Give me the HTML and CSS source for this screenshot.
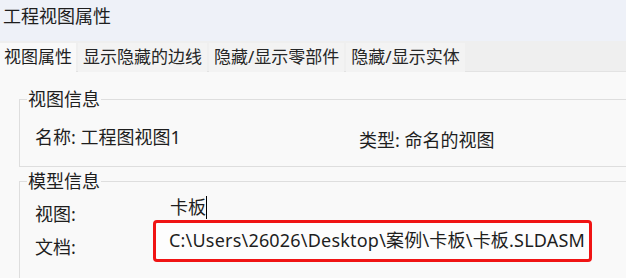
FILE: index.html
```html
<!DOCTYPE html>
<html>
<head>
    <title>工程视图属性</title>
    <link rel="stylesheet" href="styles.css">
</head>
<body>
    <div class="title-bar">工程视图属性</div>
    <div class="tabs">
        <div class="tab active">视图属性</div>
        <div class="tab">显示隐藏的边线</div>
        <div class="tab">隐藏/显示零部件</div>
        <div class="tab">隐藏/显示实体</div>
    </div>
    <div class="panel">
        <fieldset class="group view-info">
            <legend>视图信息</legend>
            <div class="info-row">
                <span class="info-name">名称: 工程图视图1</span>
                <span class="info-type">类型: 命名的视图</span>
            </div>
        </fieldset>
        <fieldset class="group model-info">
            <legend>模型信息</legend>
            <div class="field-grid">
                <span class="field-label">视图:</span>
                <span class="field-value editable">卡板<span class="caret"></span></span>
                <span class="field-label doc-label">文档:</span>
                <span class="field-value highlighted">C:\Users\26026\Desktop\案例\卡板\卡板.SLDASM</span>
            </div>
        </fieldset>
    </div>
</body>
</html>
```

FILE: styles.css
```css
body {
    font-family: "Noto Sans", "Noto Sans CJK SC", sans-serif;
    color: #1e1e1e;
    background-color: #f9f9f9;
    margin: 0;
    width: 626px;
    height: 278px;
    overflow: hidden;
}

.title-bar {
    background-color: #eef1f8;
    height: 41px;
    padding: 4px 0 0 3px;
    box-sizing: border-box;
    font-size: 18px;
    line-height: 24px;
}

.tabs {
    display: flex;
    gap: 2px;
    background-color: #efefef;
    padding-top: 2px;
    height: 31px;
    box-sizing: border-box;
    border-bottom: 1px solid #e3e3e3;
}

.tab {
    height: 29px;
    padding: 0 5px;
    font-size: 17px;
    line-height: 28px;
    background-color: #f3f3f3;
    color: #262626;
}

.tab.active {
    background-color: #f9f9f9;
    padding: 0 4px;
    height: 30px;
    color: #1e1e1e;
}

.panel {
    background-color: #f9f9f9;
    padding: 15px 0 0 19px;
}

.group {
    border: 1px solid #dedede;
    margin: 0 -20px 0 0;
    padding: 0 0 0 15px;
    min-width: 0;
}

.group legend {
    font-size: 18px;
    line-height: 24px;
    padding: 0 1px;
    margin-left: -8px;
}

.view-info {
    height: 80px;
    box-sizing: border-box;
}

.info-row {
    display: flex;
    font-size: 18px;
    line-height: 24px;
    margin-top: 14px;
}

.info-name {
    width: 324px;
}

.info-type {
    margin-top: 3px;
}

.model-info {
    margin-top: 2px;
    height: 120px;
}

.field-grid {
    display: grid;
    grid-template-columns: 118px auto;
    grid-template-rows: 25px auto;
    align-items: start;
    font-size: 18px;
    margin-top: 2px;
}

.field-label {
    line-height: 24px;
    padding-top: 7px;
}

.doc-label {
    padding-top: 15px;
}

.field-value.editable {
    padding-left: 17px;
    line-height: 24px;
}

.caret {
    display: inline-block;
    width: 1px;
    height: 23px;
    background-color: #000;
    vertical-align: -5px;
}

.field-value.highlighted {
    justify-self: start;
    border: 3px solid #f01414;
    border-radius: 4px;
    padding: 5px 4px 6px 13px;
    font-size: 18px;
    letter-spacing: 0.2px;
    line-height: 25px;
    background-color: #fdfdfd;
}
```
